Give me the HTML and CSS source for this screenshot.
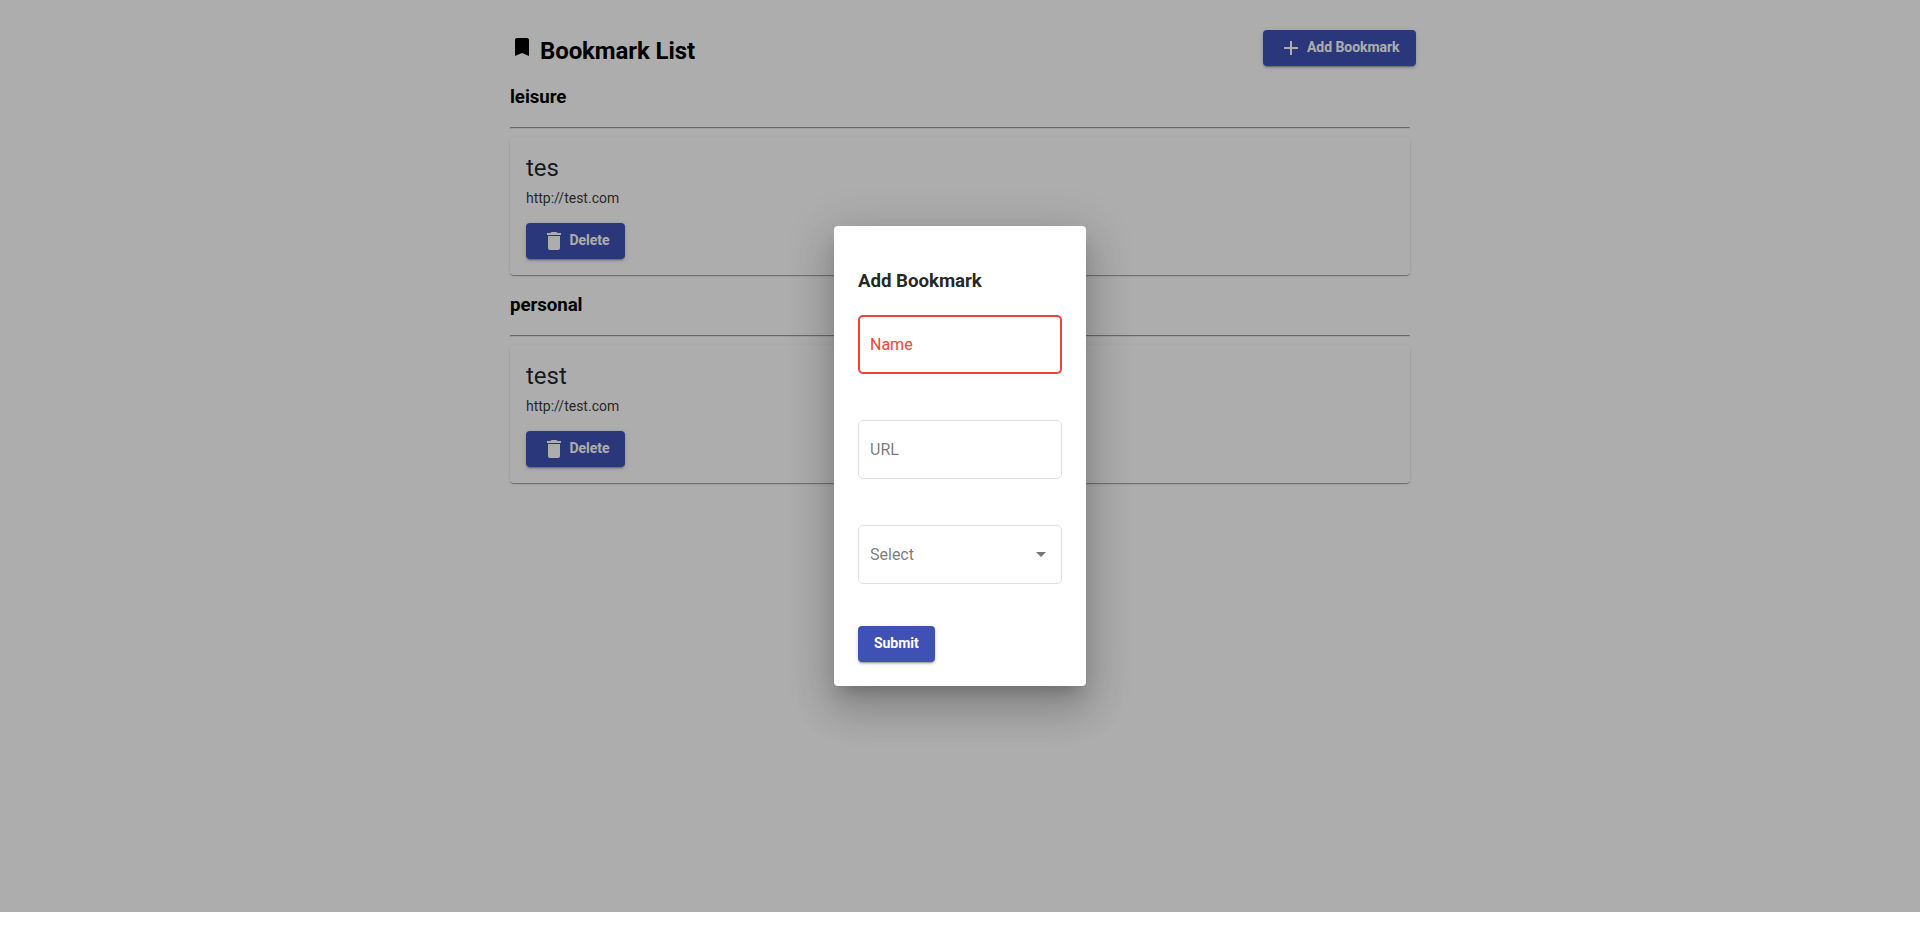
FILE: index.html
```
<!DOCTYPE html>
<html lang="en">
<head>
<meta charset="utf-8">
<title>Bookmark List</title>
<link rel="stylesheet" href="styles.css">
</head>
<body>
<main class="page">
  <header class="header">
    <svg class="icon" viewBox="0 0 24 24"><path d="M17 3H7c-1.1 0-1.99.9-1.99 2L5 21l7-3 7 3V5c0-1.1-.9-2-2-2z"/></svg>
    <h1 class="heading">Bookmark List</h1>
    <button class="button button-add"><svg class="icon" viewBox="0 0 24 24"><path d="M19 13h-6v6h-2v-6H5v-2h6V5h2v6h6v2z"/></svg><span>Add Bookmark</span></button>
  </header>
  <section class="group">
    <h3 class="group-name">leisure</h3>
    <hr class="rule">
    <article class="card">
      <h2 class="card-title">tes</h2>
      <p class="card-url">http://test.com</p>
      <button class="button button-delete"><svg class="icon" viewBox="0 0 24 24"><path d="M6 19c0 1.1.9 2 2 2h8c1.1 0 2-.9 2-2V7H6v12zM19 4h-3.5l-1-1h-5l-1 1H5v2h14V4z"/></svg><span>Delete</span></button>
    </article>
  </section>
  <section class="group">
    <h3 class="group-name">personal</h3>
    <hr class="rule">
    <article class="card">
      <h2 class="card-title">test</h2>
      <p class="card-url">http://test.com</p>
      <button class="button button-delete"><svg class="icon" viewBox="0 0 24 24"><path d="M6 19c0 1.1.9 2 2 2h8c1.1 0 2-.9 2-2V7H6v12zM19 4h-3.5l-1-1h-5l-1 1H5v2h14V4z"/></svg><span>Delete</span></button>
    </article>
  </section>
</main>
<div class="backdrop">
  <form class="dialog">
    <h3 class="dialog-title">Add Bookmark</h3>
    <div class="field field-invalid"><span>Name</span></div>
    <div class="field"><span>URL</span></div>
    <div class="field"><span>Select</span><i class="arrow"></i></div>
    <button class="button button-submit" type="button"><span>Submit</span></button>
  </form>
</div>
</body>
</html>
```
FILE: styles.css
```
* { box-sizing: border-box; }
html { overflow: hidden; background: #fff; }
body { margin: 0; font-family: Roboto, sans-serif; color: #000; }
h1, h2, h3, p { margin: 0; }
.page { width: 900px; margin: 0 auto; padding-top: 30px; }
.header { display: flex; align-items: flex-start; height: 42px; margin-right: -6px; }
.header > .icon { margin-top: 5px; }
.icon { width: 24px; height: 24px; fill: currentColor; flex: none; }
.heading { margin: 7px 0 0 6px; font-size: 24px; line-height: 28px; font-weight: 700; letter-spacing: -0.1px; }
.button {
  display: flex; align-items: center; height: 36px; padding: 0 16px; border: 0; border-radius: 4px;
  background: #3f51b5; color: #fff; font: 700 14px/36px Roboto, sans-serif; white-space: nowrap;
  box-shadow: 0 3px 1px -2px rgba(0,0,0,.2), 0 2px 2px rgba(0,0,0,.14), 0 1px 5px rgba(0,0,0,.12);
}
.button span { margin-top: -2px; letter-spacing: -0.05px; }
.button .icon { margin-right: 4px; }
.button-add { width: 153px; margin-left: auto; }
.button-delete { width: 99px; margin-top: 16px; padding-left: 15.5px; }
.group { height: 208px; }
.group-name { padding-top: 14px; font-size: 18.72px; line-height: 22px; height: 55px; letter-spacing: -0.08px; }
.rule { height: 2px; margin: 0; border: 1px solid #9a9a9a; border-right-color: #eee; border-bottom-color: #eee; }
.card {
  height: 138px; margin-top: 8px; padding: 15px 16px 16px; border-radius: 4px; background: #fff;
  box-shadow: 0 2px 1px -1px rgba(0,0,0,.2), 0 1px 1px rgba(0,0,0,.14), 0 1px 3px rgba(0,0,0,.12);
}
.card-title { font-size: 24px; line-height: 32px; font-weight: 400; color: rgba(0,0,0,.87); }
.card-url { margin-top: 5px; font-size: 14px; line-height: 18px; color: rgba(0,0,0,.8); font-weight: 400; }
.backdrop {
  position: absolute; top: 0; left: 0; width: 100%; height: 912px; overflow: hidden;
  display: flex; align-items: center; justify-content: center; background: rgba(0,0,0,.32);
}
.dialog {
  width: 252px; height: 460px; padding: 44px 24px 24px; background: #fff; border-radius: 4px;
  box-shadow: 0 11px 15px -7px rgba(0,0,0,.2), 0 24px 38px 3px rgba(0,0,0,.14), 0 9px 46px 8px rgba(0,0,0,.12);
}
.dialog-title { height: 45px; font-size: 18.72px; line-height: 22px; color: rgba(0,0,0,.87); letter-spacing: -0.05px; }
.field {
  display: flex; align-items: center; justify-content: space-between; height: 59px; margin-bottom: 46px;
  padding: 0 15px 0 11px; border: 1px solid rgba(0,0,0,.12); border-radius: 5px;
  color: rgba(0,0,0,.54); font-size: 16px; line-height: 18px;
}
.field-invalid { border: 2px solid #f44336; padding-left: 10px; color: #f44336; }
.arrow { border: 5px solid transparent; border-top-color: rgba(0,0,0,.54); border-bottom: 0; }
.button-submit { margin-top: -4px; width: 77px; }
```
